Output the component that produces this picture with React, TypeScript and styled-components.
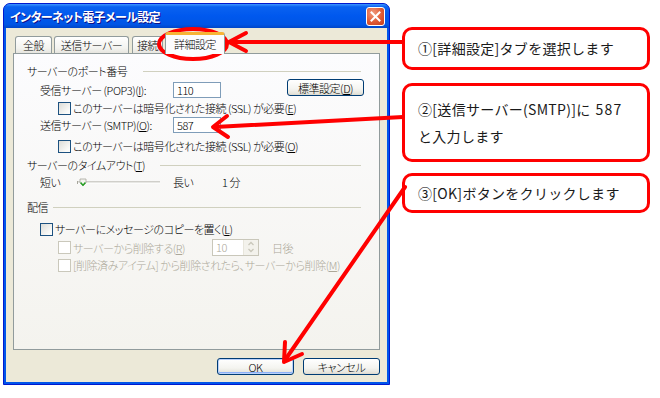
import styled, { createGlobalStyle } from "styled-components";

const Global = createGlobalStyle`
  body { margin: 0; background: #fff; }
  * { box-sizing: border-box; }
`;

const Page = styled.div`
  position: relative;
  width: 660px;
  height: 398px;
  display: flex;
  align-items: flex-start;
  font-family: "Noto Sans CJK JP", "Noto Sans", sans-serif;
  overflow: hidden;
`;

const Window = styled.div`
  margin: 3px 0 0 3px;
  width: 387px;
  height: 382px;
  display: flex;
  flex-direction: column;
  background: #0055ea;
  border: 1px solid #0019cf;
  border-radius: 7px 7px 0 0;
`;

const TitleBar = styled.div`
  height: 24px;
  display: flex;
  align-items: center;
  justify-content: space-between;
  padding: 0 4px 0 6px;
  border-radius: 6px 6px 0 0;
  background: linear-gradient(#3d95ff 0%, #0a62f0 12%, #0058ee 50%, #0055e5 85%, #0046c8 100%);
`;

const Title = styled.span`
  color: #fff;
  font-size: 12px;
  font-weight: bold;
  font-feature-settings: "palt";
  text-shadow: 1px 1px #0f1089;
  letter-spacing: -0.6px;
`;

const CloseBtn = styled.div`
  width: 19px;
  height: 19px;
  margin-top: 1px;
  border: 1px solid #fff;
  border-radius: 3px;
  background: radial-gradient(circle at 35% 30%, #f09a7d, #e05a35 55%, #c23c1c);
  display: flex;
  align-items: center;
  justify-content: center;
`;

const Body = styled.div`
  flex: 1;
  margin: 0 2px 2px;
  background: #ece9d8;
  padding: 4px 7px 0;
  display: flex;
  flex-direction: column;
  font-size: 11px;
  font-weight: 300;
  font-feature-settings: "palt";
  letter-spacing: -0.45px;
  color: #000;
`;

const TabRow = styled.div`
  display: flex;
  align-items: flex-end;
  height: 21px;
  padding-left: 2px;
`;

const Tab = styled.div<{ $w: number; $active?: boolean }>`
  position: relative;
  width: ${(p) => p.$w}px;
  height: ${(p) => (p.$active ? 22 : 17)}px;
  margin-right: 2px;
  margin-bottom: ${(p) => (p.$active ? -1 : 0)}px;
  z-index: ${(p) => (p.$active ? 2 : 0)};
  border: 1px solid #919b9c;
  border-bottom: none;
  border-top: ${(p) => (p.$active ? "3px solid #f7b436" : "1px solid #919b9c")};
  border-radius: 3px 3px 0 0;
  background: ${(p) => (p.$active ? "#fcfcfe" : "linear-gradient(#fff, #f3f3ef 70%, #e6e5df)")};
  display: flex;
  align-items: center;
  justify-content: center;
  line-height: 14px;
  padding-bottom: ${(p) => (p.$active ? 2 : 0)}px;
`;

const Panel = styled.div`
  height: 297px;
  border: 1px solid #919b9c;
  background: linear-gradient(#fcfcfe, #f4f3ee);
  padding: 9px 15px 0 13px;
  display: flex;
  flex-direction: column;
`;

const GroupHead = styled.div<{ $mt: number; $gap: number }>`
  display: flex;
  align-items: center;
  height: 16px;
  margin-top: ${(p) => p.$mt}px;
  &::after {
    content: "";
    flex: 1;
    height: 1px;
    background: #d0d0bf;
    margin-left: ${(p) => p.$gap}px;
    margin-right: 3px;
  }
`;

const Row = styled.div<{ $mt: number; $h: number; $indent: number }>`
  display: flex;
  align-items: center;
  height: ${(p) => p.$h}px;
  margin-top: ${(p) => p.$mt}px;
  padding-left: ${(p) => p.$indent}px;
`;

const Label = styled.span<{ $w?: number; $disabled?: boolean }>`
  width: ${(p) => (p.$w ? `${p.$w}px` : "auto")};
  flex: none;
  color: ${(p) => (p.$disabled ? "#aca899" : "#000")};
  white-space: nowrap;
  line-height: 14px;
`;

const TextBox = styled.div`
  width: 48px;
  height: 16px;
  border: 1px solid #7f9db9;
  background: #fff;
  padding-left: 3px;
  line-height: 14px;
`;

const Check = styled.span<{ $disabled?: boolean }>`
  width: 13px;
  height: 13px;
  flex: none;
  margin-right: 2px;
  border: 1px solid ${(p) => (p.$disabled ? "#cac8bb" : "#1c5180")};
  background: ${(p) => (p.$disabled ? "#fff" : "linear-gradient(135deg, #dcdcd7, #fbfbf9 80%)")};
`;

const XpButton = styled.div<{ $default?: boolean; $mt?: number }>`
  width: 77px;
  height: 17px;
  margin-top: ${(p) => p.$mt ?? 0}px;
  border: 1px solid #003c74;
  border-radius: 3px;
  background: linear-gradient(#fff, #f4f4f0 60%, #e3e1d8 95%, #d6d0c5);
  box-shadow: ${(p) => (p.$default ? "inset 0 0 0 1px #b9d1fa, inset 0 -1px 0 1px #8cb0f8" : "none")};
  display: flex;
  align-items: center;
  justify-content: center;
  line-height: 14px;
  flex: none;
`;

const PushRight = styled.div`
  margin-left: auto;
  align-self: flex-start;
`;

const Spinner = styled.div`
  width: 47px;
  height: 17px;
  border: 1px solid #c9c7ba;
  background: #fff;
  display: flex;
  color: #aca899;
  line-height: 15px;
  padding-left: 3px;
  margin-right: 13px;
  justify-content: space-between;
`;

const SpinBtns = styled.div`
  width: 15px;
  display: flex;
  flex-direction: column;
  background: #f3f2ec;
  border-left: 1px solid #e8e6dc;
`;

const ButtonRow = styled.div`
  display: flex;
  justify-content: flex-end;
  gap: 9px;
  margin-top: 8px;
`;

const Callouts = styled.div`
  margin: 24px 0 0 12px;
  width: 248px;
  display: flex;
  flex-direction: column;
  font-size: 14px;
  letter-spacing: 0.3px;
  color: #1a1a1a;
`;

const Callout = styled.div<{ $mt: number; $h: number }>`
  margin-top: ${(p) => p.$mt}px;
  height: ${(p) => p.$h}px;
  border: 3px solid #f00;
  border-radius: 10px;
  padding: 0 10px 0 13px;
  display: flex;
  flex-direction: column;
  justify-content: center;
  line-height: 27px;
  white-space: nowrap;
`;

const Num = styled.span`
  margin-left: 5px;
  letter-spacing: 1.2px;
`;

const Overlay = styled.svg`
  position: absolute;
  left: 0;
  top: 0;
  pointer-events: none;
`;

function Slider() {
  return (
    <svg width="83" height="16" viewBox="0 0 83 16" style={{ flex: "none", marginRight: 13 }}>
      <line x1="1" y1="8" x2="83" y2="8" stroke="#a7a69c" strokeWidth="1" />
      <line x1="1" y1="9" x2="83" y2="9" stroke="#fff" strokeWidth="1" />
      <line x1="0.5" y1="7" x2="0.5" y2="10" stroke="#a7a69c" />
      <path d="M3 5 h6 v4 l-3 3 l-3 -3 z" fill="#f4f4f0" stroke="#a7a69c" strokeWidth="0.8" />
      <path d="M3.6 8.5 l2.4 2.6 l2.4 -2.6" fill="none" stroke="#21a121" strokeWidth="1.4" />
    </svg>
  );
}

export default function App() {
  return (
    <Page>
      <Global />
      <Window>
        <TitleBar>
          <Title>インターネット電子メール設定</Title>
          <CloseBtn>
            <svg width="11" height="11" viewBox="0 0 11 11">
              <path d="M1.5 1.5 L9.5 9.5 M9.5 1.5 L1.5 9.5" stroke="#fff" strokeWidth="2" strokeLinecap="square" />
            </svg>
          </CloseBtn>
        </TitleBar>
        <Body>
          <TabRow>
            <Tab $w={37}>全般</Tab>
            <Tab $w={75} style={{ marginRight: 3 }}>送信サーバー</Tab>
            <Tab $w={31}>接続</Tab>
            <Tab $w={60} $active>詳細設定</Tab>
          </TabRow>
          <Panel>
            <GroupHead $mt={0} $gap={16}>サーバーのポート番号</GroupHead>
            <Row $mt={2} $h={17} $indent={13}>
              <Label $w={133}>受信サーバー (POP3)(<u>I</u>):</Label>
              <TextBox>110</TextBox>
              <PushRight>
                <XpButton $mt={-2}>標準設定(<u>D</u>)</XpButton>
              </PushRight>
            </Row>
            <Row $mt={3} $h={14} $indent={31}>
              <Check />
              <Label>このサーバーは暗号化された接続 (SSL) が必要(<u>E</u>)</Label>
            </Row>
            <Row $mt={1} $h={17} $indent={13}>
              <Label $w={133}>送信サーバー (SMTP)(<u>O</u>):</Label>
              <TextBox>587</TextBox>
            </Row>
            <Row $mt={6} $h={14} $indent={31}>
              <Check />
              <Label>このサーバーは暗号化された接続 (SSL) が必要(<u>O</u>)</Label>
            </Row>
            <GroupHead $mt={4} $gap={15}>サーバーのタイムアウト(<u>T</u>)</GroupHead>
            <Row $mt={1} $h={16} $indent={13}>
              <Label $w={37}>短い</Label>
              <Slider />
              <Label $w={49}>長い</Label>
              <Label>1 分</Label>
            </Row>
            <GroupHead $mt={9} $gap={5}>配信</GroupHead>
            <Row $mt={7} $h={14} $indent={13}>
              <Check />
              <Label>サーバーにメッセージのコピーを置く(<u>L</u>)</Label>
            </Row>
            <Row $mt={3} $h={17} $indent={31}>
              <Check $disabled />
              <Label $w={139} $disabled>サーバーから削除する(<u>R</u>)</Label>
              <Spinner>
                10
                <SpinBtns>
                  <svg width="14" height="7" viewBox="0 0 14 7">
                    <path d="M4.5 5 L7 2.5 L9.5 5" fill="none" stroke="#c9c7ba" strokeWidth="1.3" />
                  </svg>
                  <svg width="14" height="7" viewBox="0 0 14 7">
                    <path d="M4.5 2 L7 4.5 L9.5 2" fill="none" stroke="#c9c7ba" strokeWidth="1.3" />
                  </svg>
                </SpinBtns>
              </Spinner>
              <Label $disabled>日後</Label>
            </Row>
            <Row $mt={2} $h={14} $indent={31}>
              <Check $disabled />
              <Label $disabled>[削除済みアイテム] から削除されたら、サーバーから削除(<u>M</u>)</Label>
            </Row>
          </Panel>
          <ButtonRow>
            <XpButton $default>OK</XpButton>
            <XpButton>キャンセル</XpButton>
          </ButtonRow>
        </Body>
      </Window>
      <Callouts>
        <Callout $mt={3} $h={43}>①[詳細設定]タブを選択します</Callout>
        <Callout $mt={13} $h={79}>
          <span>②[送信サーバー(SMTP)]に<Num>587</Num></span>
          <span>と入力します</span>
        </Callout>
        <Callout $mt={11} $h={40}>③[OK]ボタンをクリックします</Callout>
      </Callouts>
      <Overlay width="660" height="398" viewBox="0 0 660 398">
        <g fill="none" stroke="#f00" strokeWidth="4" strokeLinecap="round" strokeLinejoin="round">
          <ellipse cx="193" cy="44" rx="34" ry="15" />
          <line x1="403" y1="42" x2="230" y2="42" />
          <polyline points="246,33 229,42 246,51" />
          <line x1="403" y1="117" x2="215" y2="127" />
          <polyline points="227,116 213,127 228,137" />
          <line x1="405" y1="187" x2="285" y2="360" />
          <polyline points="285,342 284,362 302,354" />
        </g>
      </Overlay>
    </Page>
  );
}
